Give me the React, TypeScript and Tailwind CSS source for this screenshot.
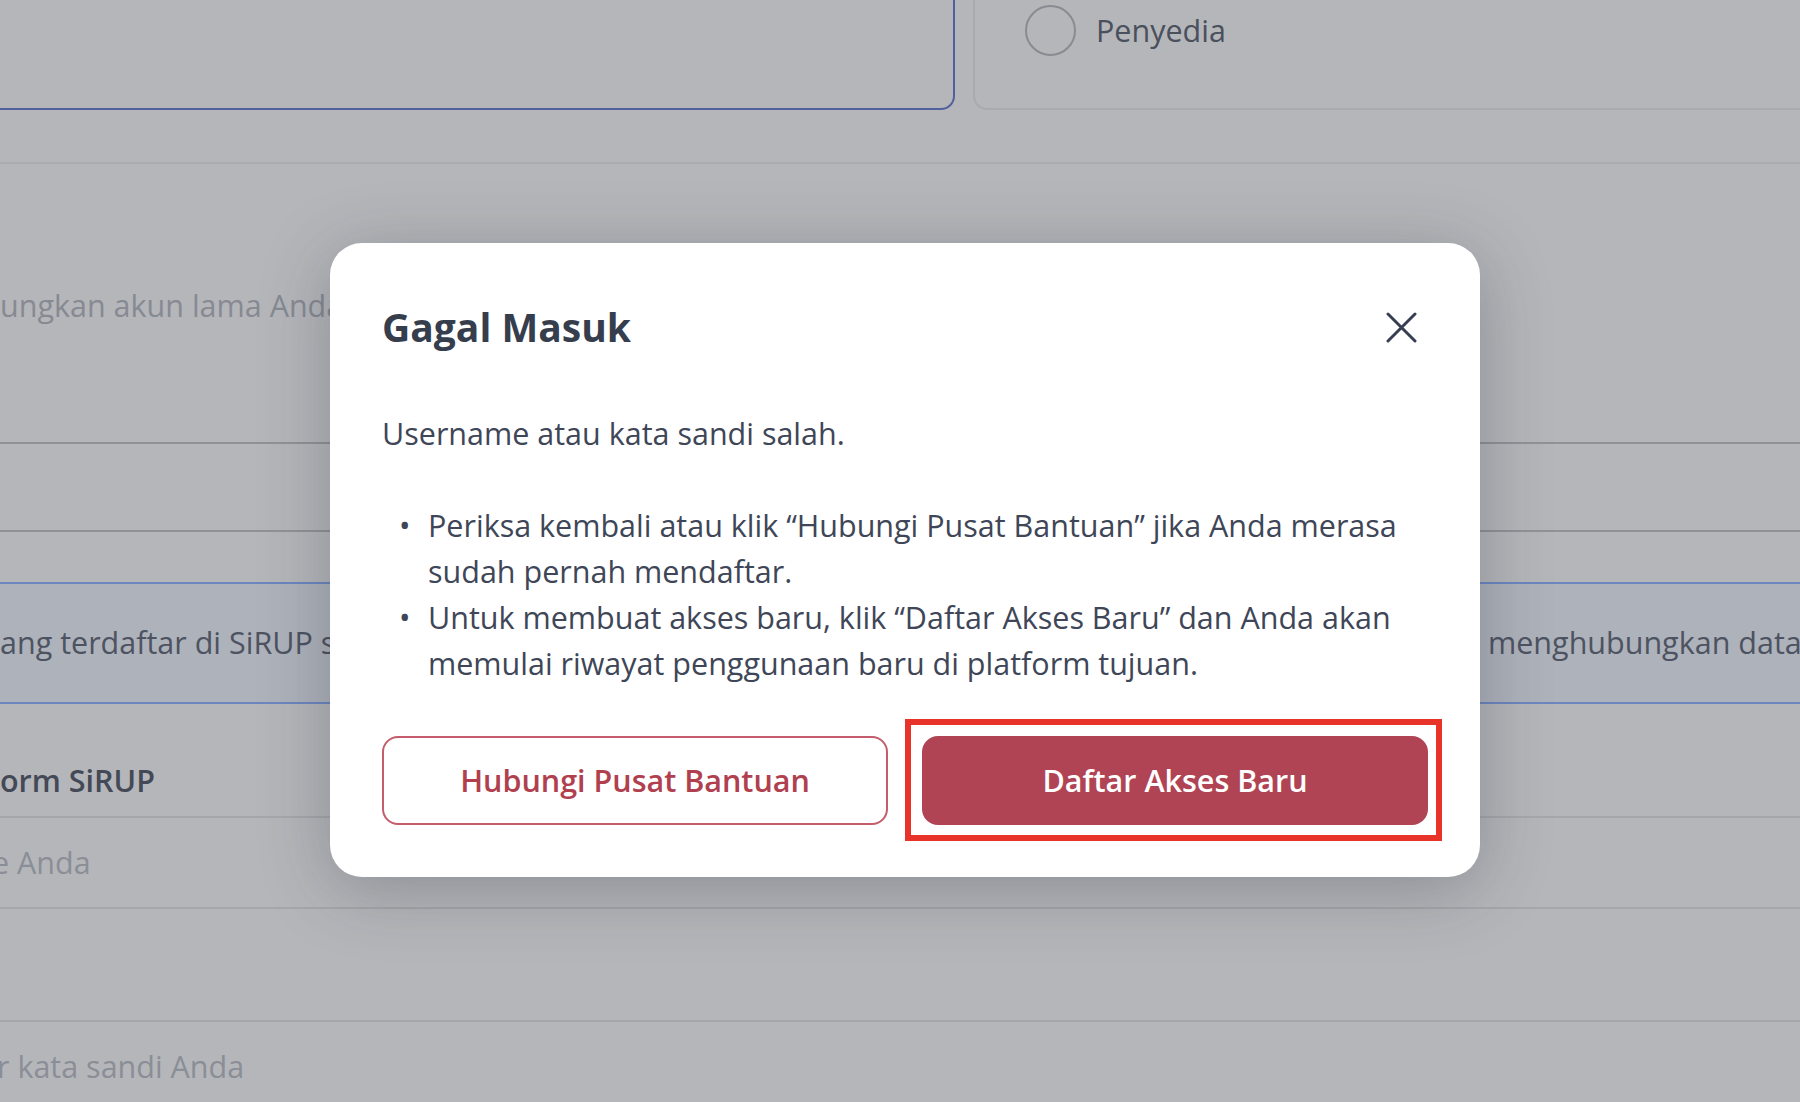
import { useState } from "react";

function CloseIcon() {
  return (
    <svg width="31" height="31" viewBox="0 0 31 31" fill="none">
      <path d="M2 2L29 29M29 2L2 29" stroke="#363f52" strokeWidth="3" strokeLinecap="round" />
    </svg>
  );
}

function FailedLoginModal({ onClose }: { onClose: () => void }) {
  return (
    <div className="w-[1150px] rounded-[32px] bg-white px-[52px] pt-[60px] pb-[52px] shadow-[0_12px_70px_rgba(30,35,45,0.28)]">
      <div className="flex h-[48px] items-center justify-between">
        <h2 className="text-[39px] leading-[48px] font-bold text-[#363e4e]">Gagal Masuk</h2>
        <button
          type="button"
          onClick={onClose}
          className="flex h-[54px] w-[54px] items-center justify-center"
          aria-label="Tutup"
        >
          <CloseIcon />
        </button>
      </div>

      <p className="mt-[59px] text-[30.5px] leading-[46px] text-[#3e4657]">Username atau kata sandi salah.</p>

      <ul className="mt-[46px] text-[30.5px] leading-[46px] text-[#3e4657]">
        <li className="flex">
          <span className="w-[46px] shrink-0 pl-[17px]">•</span>
          <span>Periksa kembali atau klik “Hubungi Pusat Bantuan” jika Anda merasa sudah pernah mendaftar.</span>
        </li>
        <li className="flex">
          <span className="w-[46px] shrink-0 pl-[17px]">•</span>
          <span>Untuk membuat akses baru, klik “Daftar Akses Baru” dan Anda akan memulai riwayat penggunaan baru di platform tujuan.</span>
        </li>
      </ul>

      <div className="mt-[50px] grid grid-cols-2 gap-[34px]">
        <button
          type="button"
          className="h-[89px] rounded-[16px] border-2 border-[#c45c6b] text-[30.5px] font-semibold text-[#b1404f]"
        >
          Hubungi Pusat Bantuan
        </button>
        <div className="relative">
          <button
            type="button"
            className="h-[89px] w-full rounded-[16px] bg-[#b04454] text-[30.5px] font-semibold text-white"
          >
            Daftar Akses Baru
          </button>
          {/* highlight frame */}
          <div className="pointer-events-none absolute -top-[17px] -right-[14px] -bottom-[16px] -left-[17px] border-[6px] border-[#e8332a]" />
        </div>
      </div>
    </div>
  );
}

export default function App() {
  const [open, setOpen] = useState(true);

  return (
    <div className="relative h-[1102px] w-full overflow-hidden bg-[#b5b6ba] font-['Open_Sans',sans-serif]">
      <div className="flex flex-col">
        {/* role cards */}
        <div className="-mt-[40px] flex h-[150px] gap-[18px]">
          <div className="-ml-[20px] w-[975px] shrink-0 rounded-[14px] border-2 border-[#51609e]" />
          <div className="-mr-[20px] flex-1 rounded-[14px] border-2 border-[#a8aaae] pt-[43px] pl-[50px]">
            <div className="flex h-[51px] items-center gap-[20px]">
              <span className="h-[51px] w-[51px] rounded-full border-2 border-[#888b91]" />
              <span className="text-[30.5px] text-[#4a505c]">Penyedia</span>
            </div>
          </div>
        </div>

        <div className="mt-[52px] h-[2px] bg-[#aaacb0]" />

        <p className="mt-[118px] text-[30.5px] leading-[46px] whitespace-nowrap text-[#868a92]">
          ungkan akun lama Anda untuk melanjutkan
        </p>

        <div className="mt-[114px] h-[90px] border-y-2 border-[#8f9297]" />

        <div className="mt-[50px] flex h-[122px] items-center border-y-2 border-[#6c87c0] bg-[#aeb2bb] text-[30.5px] whitespace-nowrap text-[#4d5361]">
          <div className="w-[1488px] shrink-0 overflow-hidden">ang terdaftar di SiRUP sebelumnya</div>
          <div>menghubungkan data</div>
        </div>

        <p className="mt-[53px] text-[30.5px] leading-[46px] font-semibold whitespace-nowrap text-[#434956]">
          orm SiRUP
        </p>

        <div className="mt-[13px] flex h-[93px] items-center border-y-2 border-[#a5a7ab]">
          <span className="-ml-[8px] text-[30.5px] text-[#8a8e96]">e Anda</span>
        </div>

        <div className="mt-[111px] flex h-[92px] items-center border-t-2 border-[#a5a7ab]">
          <span className="-ml-[3px] text-[30.5px] text-[#8a8e96]">r kata sandi Anda</span>
        </div>
      </div>

      {open && (
        <div className="absolute inset-0 flex items-center justify-center pt-[18px] pl-[10px]">
          <FailedLoginModal onClose={() => setOpen(false)} />
        </div>
      )}
    </div>
  );
}
